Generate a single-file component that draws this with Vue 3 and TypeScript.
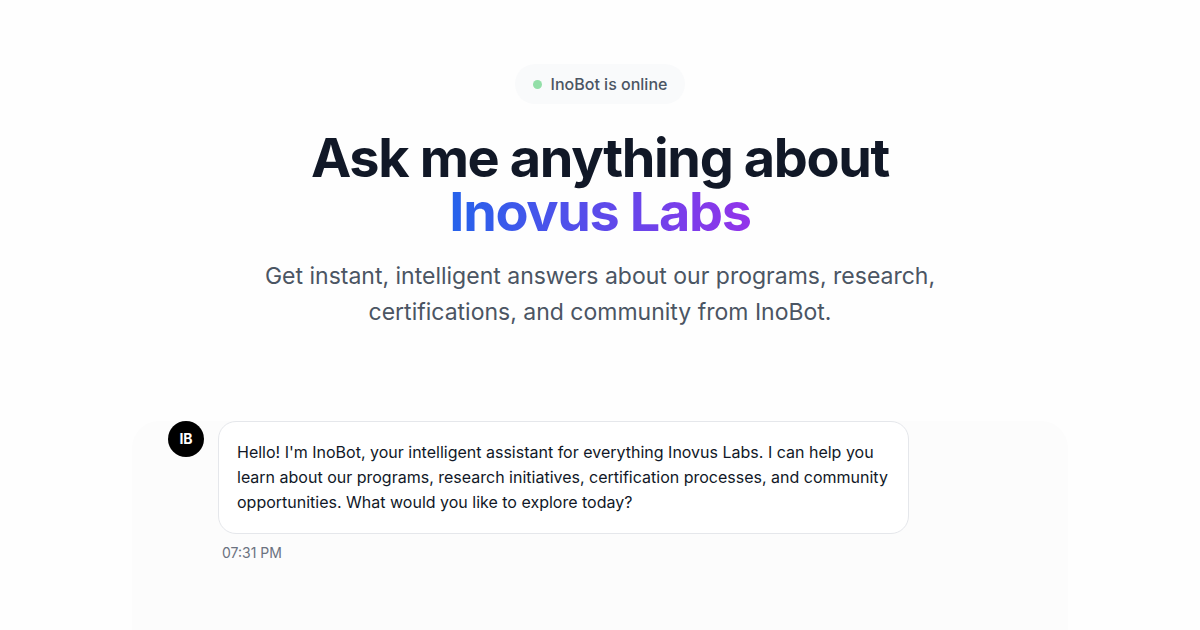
<script setup lang="ts">
interface Message {
  id: number
  initials: string
  text: string
  time: string
}

const messages: Message[] = [
  {
    id: 1,
    initials: 'IB',
    text: "Hello! I'm InoBot, your intelligent assistant for everything Inovus Labs. I can help you learn about our programs, research initiatives, certification processes, and community opportunities. What would you like to explore today?",
    time: '07:31 PM',
  },
]
</script>

<template>
  <main class="page">
    <header class="hero">
      <div class="status"><span class="dot"></span>InoBot is online</div>
      <h1>Ask me anything about <span class="brand">Inovus Labs</span></h1>
      <p class="lead">
        Get instant, intelligent answers about our programs, research,
        certifications, and community from InoBot.
      </p>
    </header>
    <section class="chat" aria-label="Conversation">
      <article v-for="message in messages" :key="message.id" class="message">
        <div class="avatar">{{ message.initials }}</div>
        <div class="body">
          <p class="bubble">{{ message.text }}</p>
          <time class="time">{{ message.time }}</time>
        </div>
      </article>
    </section>
  </main>
</template>

<style>
body {
  margin: 0;
  background: #fefefe;
}
</style>

<style scoped>
.page {
  box-sizing: border-box;
  min-height: 100vh;
  display: flex;
  flex-direction: column;
  align-items: center;
  padding: 64px 32px 0;
  font-family: Inter, "Liberation Sans", sans-serif;
  color: #111827;
}
.hero {
  display: flex;
  flex-direction: column;
  align-items: center;
  text-align: center;
}
.status {
  display: flex;
  align-items: center;
  gap: 9px;
  padding: 0 18px;
  border-radius: 20px;
  background: #f9fafb;
  color: #4b5563;
  font-size: 16px;
  line-height: 40px;
  font-weight: 500;
}
.dot {
  width: 9px;
  height: 9px;
  border-radius: 50%;
  background: #93dfa8;
}
h1 {
  margin: 27px 0 0;
  font-size: 54px;
  line-height: 54px;
  font-weight: 700;
  letter-spacing: -0.025em;
}
.brand {
  display: block;
  width: fit-content;
  margin: 0 auto;
  background: linear-gradient(to right, #2563eb, #9333ea);
  background-clip: text;
  -webkit-background-clip: text;
  color: transparent;
}
.lead {
  max-width: 690px;
  margin: 19px 0 0;
  color: #4b5563;
  font-size: 23px;
  line-height: 36px;
}
.chat {
  box-sizing: border-box;
  flex: 1;
  width: 100%;
  max-width: 936px;
  min-height: 210px;
  margin-top: 91px;
  padding: 0 36px;
  border-radius: 27px 27px 0 0;
  background: #fcfcfc;
}
.message {
  display: flex;
  align-items: flex-start;
  gap: 14px;
}
.avatar {
  flex: none;
  width: 36px;
  border-radius: 50%;
  background: #000;
  color: #fff;
  font-size: 14px;
  line-height: 36px;
  font-weight: 700;
  text-align: center;
}
.body {
  max-width: 691px;
}
.bubble {
  margin: 0;
  padding: 18px;
  border: 1px solid #e5e7eb;
  border-radius: 18px;
  background: #fff;
  font-size: 16px;
  line-height: 25px;
}
.time {
  display: block;
  margin: 10px 4px 0;
  color: #6b7280;
  font-size: 14px;
  line-height: 18px;
}
</style>
